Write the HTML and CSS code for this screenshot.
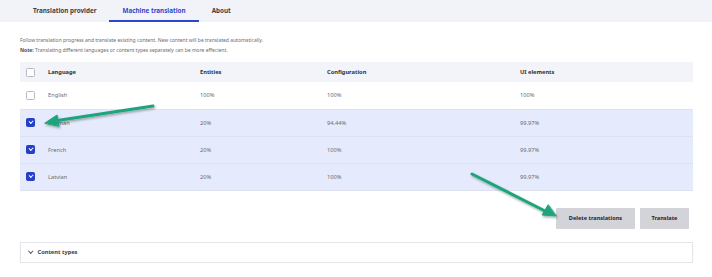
FILE: index.html
```html
<!DOCTYPE html>
<html>
<head>
    <title>Machine translation</title>
    <link rel="stylesheet" href="styles.css">
</head>
<body>
    <div class="tabs">
        <a class="tab">Translation provider</a>
        <a class="tab active">Machine translation</a>
        <a class="tab">About</a>
    </div>

    <div class="page">
        <div class="intro">
            <p>Follow translation progress and translate existing content. New content will be translated automatically.</p>
            <p><strong>Note:</strong> Translating different languages or content types separately can be more effecient.</p>
        </div>

        <table class="langs">
            <colgroup>
                <col class="c-check">
                <col class="c-lang">
                <col class="c-ent">
                <col class="c-conf">
                <col>
            </colgroup>
            <thead>
                <tr>
                    <th><span class="box"></span></th>
                    <th>Language</th>
                    <th>Entities</th>
                    <th>Configuration</th>
                    <th>UI elements</th>
                </tr>
            </thead>
            <tbody>
                <tr>
                    <td><span class="box"></span></td>
                    <td>English</td>
                    <td>100%</td>
                    <td>100%</td>
                    <td>100%</td>
                </tr>
                <tr class="selected">
                    <td><span class="box checked"></span></td>
                    <td>German</td>
                    <td>20%</td>
                    <td>94.44%</td>
                    <td>99.97%</td>
                </tr>
                <tr class="selected">
                    <td><span class="box checked"></span></td>
                    <td>French</td>
                    <td>20%</td>
                    <td>100%</td>
                    <td>99.97%</td>
                </tr>
                <tr class="selected">
                    <td><span class="box checked"></span></td>
                    <td>Latvian</td>
                    <td>20%</td>
                    <td>100%</td>
                    <td>99.97%</td>
                </tr>
            </tbody>
        </table>

        <div class="actions">
            <button class="btn btn-delete">Delete translations</button>
            <button class="btn btn-translate">Translate</button>
        </div>

        <div class="details">
            <span class="chev"></span>
            <span>Content types</span>
        </div>
    </div>

    <!-- annotation arrows -->
    <svg class="arrows" width="712" height="277" viewBox="0 0 712 277">
        <defs>
            <filter id="shadow" x="-20%" y="-50%" width="140%" height="200%">
                <feDropShadow dx="1" dy="1.5" stdDeviation="1" flood-color="#000" flood-opacity="0.35"/>
            </filter>
        </defs>
        <g filter="url(#shadow)" fill="#1ea57d" stroke="#1ea57d" stroke-linecap="round">
            <line x1="153" y1="106" x2="54" y2="121" stroke-width="3"/>
            <polygon points="45,123 57,115 59,126" stroke-width="1" stroke-linejoin="round"/>
            <line x1="472" y1="174" x2="547" y2="212" stroke-width="3"/>
            <polygon points="556,216 542,215 548,205" stroke-width="1" stroke-linejoin="round"/>
        </g>
    </svg>
</body>
</html>
```

FILE: styles.css
```css
body {
    margin: 0;
    font-family: 'Noto Sans', Arial, sans-serif;
    color: #55565b;
    background: #fff;
    position: relative;
}
.tabs {
    background: #f2f3f8;
    height: 22px;
    padding-left: 20px;
    display: flex;
}
.tab {
    padding: 0 13px;
    font-size: 6.3px;
    font-weight: bold;
    color: #3e3f46;
    line-height: 22px;
    box-sizing: border-box;
}
.tab.active {
    color: #2c48c8;
    border-bottom: 2px solid #2c48c8;
}
.page {
    padding: 0 19px 0 20px;
}
.intro {
    padding-top: 14px;
    font-size: 5px;
    color: #6b6c72;
}
.intro p {
    margin: 0;
    line-height: 9.5px;
}
.intro strong {
    color: #4a4b52;
}
.langs {
    width: 100%;
    margin-top: 7px;
    border-collapse: collapse;
    table-layout: fixed;
    font-size: 5.7px;
}
.c-check { width: 22px; }
.c-lang { width: 152px; }
.c-ent { width: 127px; }
.c-conf { width: 193px; }
.langs th, .langs td {
    text-align: left;
    padding: 0 0 0 6px;
    vertical-align: middle;
}
.langs thead tr {
    background: #f3f4f9;
    height: 20px;
}
.langs th {
    font-weight: bold;
    color: #2f3036;
}
.langs tbody tr {
    height: 27px;
    border-bottom: 1px solid #dfe2ee;
}
.langs td {
    color: #6a6b72;
}
.langs tr.selected {
    background: #e5ebfc;
}
.box {
    display: block;
    width: 7px;
    height: 7px;
    border: 0.8px solid #b8b9c2;
    border-radius: 1.5px;
    background: #fff;
}
.box.checked {
    background: #2340c6;
    border-color: #2340c6;
    position: relative;
}
.box.checked::after {
    content: "";
    position: absolute;
    left: 2px;
    top: 1.2px;
    width: 3px;
    height: 1.6px;
    border-left: 1px solid #fff;
    border-bottom: 1px solid #fff;
    transform: rotate(-45deg);
}
.actions {
    display: flex;
    justify-content: flex-end;
    gap: 5px;
    margin: 17px 4px 0 0;
}
.btn {
    height: 21px;
    padding: 0;
    border: 0;
    border-radius: 1px;
    background: #d3d4d9;
    font-family: 'Noto Sans', Arial, sans-serif;
    font-size: 5.6px;
    font-weight: bold;
    color: #222330;
}
.btn-delete { width: 79px; }
.btn-translate { width: 49px; }
.details {
    margin-top: 13px;
    height: 21px;
    box-sizing: border-box;
    border: 1px solid #e4e5ea;
    box-shadow: 0 1px 1px rgba(0, 0, 0, 0.08);
    display: flex;
    align-items: center;
    padding-left: 8px;
    gap: 5px;
    font-size: 5.7px;
    font-weight: bold;
    color: #3b3c43;
}
.chev {
    width: 2.5px;
    height: 2.5px;
    border-right: 0.8px solid #55565b;
    border-bottom: 0.8px solid #55565b;
    transform: rotate(45deg);
    margin-top: -2px;
}
.arrows {
    position: absolute;
    left: 0;
    top: 0;
    pointer-events: none;
}
```
